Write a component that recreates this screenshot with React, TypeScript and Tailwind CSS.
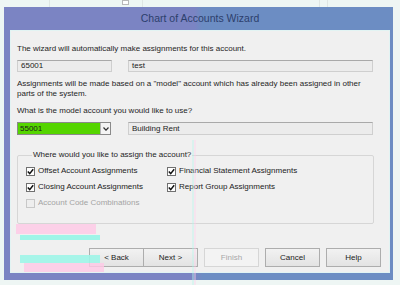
import React from 'react';

const font = "font-['Liberation_Sans',Arial,sans-serif]";

function CheckBox({ label, checked = true, disabled = false }: { label: string; checked?: boolean; disabled?: boolean }) {
    return (
        <div className="flex items-center h-[16px]">
            <span
                className={`w-[9px] h-[9px] border flex items-center justify-center ${disabled ? 'border-[#c8c8c8] bg-[#eeeeee]' : 'border-[#707070] bg-white'}`}
            >
                {checked && (
                    <svg width="7" height="7" viewBox="0 0 7 7">
                        <path d="M0.8 3.6 L2.7 5.6 L6.2 1.2" fill="none" stroke="#111" strokeWidth="1.5" />
                    </svg>
                )}
            </span>
            <span className={`ml-[3px] leading-[10px] ${disabled ? 'text-[#a4a4a4]' : 'text-[#222]'}`}>{label}</span>
        </div>
    );
}

function WizButton({ label, disabled = false, className = '' }: { label: string; disabled?: boolean; className?: string }) {
    return (
        <div
            className={`w-[55px] h-[19px] flex items-center justify-center border ${disabled ? 'border-[#d6d6d6] bg-[#f3f3f3] text-[#a8a8a8]' : 'border-[#adadad] bg-gradient-to-b from-[#f2f2f2] to-[#e3e3e3] text-[#222]'} ${className}`}
        >
            {label}
        </div>
    );
}

export default function App() {
    return (
        <div className={`relative w-[400px] h-[285px] overflow-hidden bg-[#eef6f4] text-[8px] ${font}`}>
            {/* window behind */}
            <div className="h-[7px] flex">
                <div className="w-[50px] border-r border-[#dfe6e4]" />
                <div className="w-[72px]" />
                <div className="w-[7px] h-[5px] border border-[#b9b9b9] bg-white" />
                <div className="w-[14px] border-r border-[#dfe6e4]" />
                <div className="w-[177px] border-r border-[#dfe6e4]" />
                <div className="w-[8px] border-r border-[#dfe6e4]" />
            </div>

            {/* dialog */}
            <div className="ml-[4px] w-[389px] h-[273px] flex flex-col pl-[6px] pr-[3px] pb-[7px] bg-[linear-gradient(90deg,#7b84c3_0%,#7b84c3_49%,#6c8dc3_51%,#6c8dc3_100%)]">
                <div className="h-[23px] flex items-center justify-center text-[10.5px] text-[#2c3f6c]">
                    Chart of Accounts Wizard
                </div>
                <div className="flex-1 flex flex-col bg-[#f0f0f0] border border-[#e2f4f3] pl-[6px] pr-[8px]">
                    <div className="mt-[13px] leading-[10px] text-[#1e1e1e]">
                        The wizard will automatically make assignments for this account.
                    </div>

                    <div className="mt-[6px] flex gap-[16px]">
                        <div className="w-[95px] h-[12px] flex items-center pl-[3px] border border-[#cfcfcf] border-t-[#a9a9a9] bg-[#ececec] text-[#222]">
                            65001
                        </div>
                        <div className="w-[245px] h-[12px] flex items-center pl-[3px] border border-[#cfcfcf] border-t-[#a9a9a9] bg-[#ececec] text-[#222]">
                            test
                        </div>
                    </div>

                    <div className="mt-[7px] leading-[10px] text-[#1e1e1e] whitespace-nowrap">
                        Assignments will be made based on a "model" account which has already been assigned in other
                        <br />
                        parts of the system.
                    </div>

                    <div className="mt-[7px] leading-[10px] text-[#1e1e1e]">
                        What is the model account you would like to use?
                    </div>

                    <div className="mt-[6px] flex gap-[17px]">
                        <div className="w-[94px] h-[13px] flex border border-[#8a8a8a]">
                            <div className="flex-1 flex items-center pl-[2px] bg-[#55d500] text-[#1a1a1a]">55001</div>
                            <div className="w-[10px] flex items-center justify-center bg-[#f4f4f4] border-l border-[#b5b5b5]">
                                <svg width="6" height="4" viewBox="0 0 6 4">
                                    <path d="M0.5 0.5 L3 3.2 L5.5 0.5" fill="none" stroke="#333" strokeWidth="1.2" />
                                </svg>
                            </div>
                        </div>
                        <div className="w-[245px] h-[13px] flex items-center pl-[3px] border border-[#cfcfcf] border-t-[#a9a9a9] bg-[#ececec] text-[#222]">
                            Building Rent
                        </div>
                    </div>

                    <fieldset className="mt-[15px] w-[357px] h-[74px] border border-[#d6d6d6] rounded-[2px] pl-[8px]">
                        <legend className="ml-[6px] px-[1px] leading-[10px] text-[#1e1e1e]">
                            Where would you like to assign the account?
                        </legend>
                        <div className="mt-[3px] grid grid-cols-[141px_1fr]">
                            <CheckBox label="Offset Account Assignments" />
                            <CheckBox label="Financial Statement Assignments" />
                            <CheckBox label="Closing Account Assignments" />
                            <CheckBox label="Report Group Assignments" />
                            <CheckBox label="Account Code Combinations" checked={false} disabled />
                        </div>
                    </fieldset>

                    <div className="mt-[24px] flex justify-end">
                        <WizButton label="< Back" />
                        <WizButton label="Next >" className="-ml-px" />
                        <WizButton label="Finish" disabled className="ml-[6px]" />
                        <WizButton label="Cancel" className="ml-[6px]" />
                        <WizButton label="Help" className="ml-[6px]" />
                    </div>
                </div>
            </div>

            {/* smeared redaction marks over the lower-left corner */}
            <div className="absolute left-[16px] top-[224px] w-[80px] h-[10px] bg-[#ffc8e6] opacity-80" />
            <div className="absolute left-[20px] top-[235px] w-[80px] h-[5px] bg-[#9ff5e8]" />
            <div className="absolute left-[20px] top-[255px] w-[80px] h-[8px] bg-[#9ff5e8] opacity-90" />
            <div className="absolute left-[24px] top-[263px] w-[80px] h-[9px] bg-[#ffc8e6] opacity-80" />
            <div className="absolute left-[192px] top-[140px] w-[2px] h-[145px] bg-[#b8f5ec] opacity-40" />
            <div className="absolute left-[194px] top-[140px] w-[2px] h-[145px] bg-[#ffd2ea] opacity-40" />
        </div>
    );
}
